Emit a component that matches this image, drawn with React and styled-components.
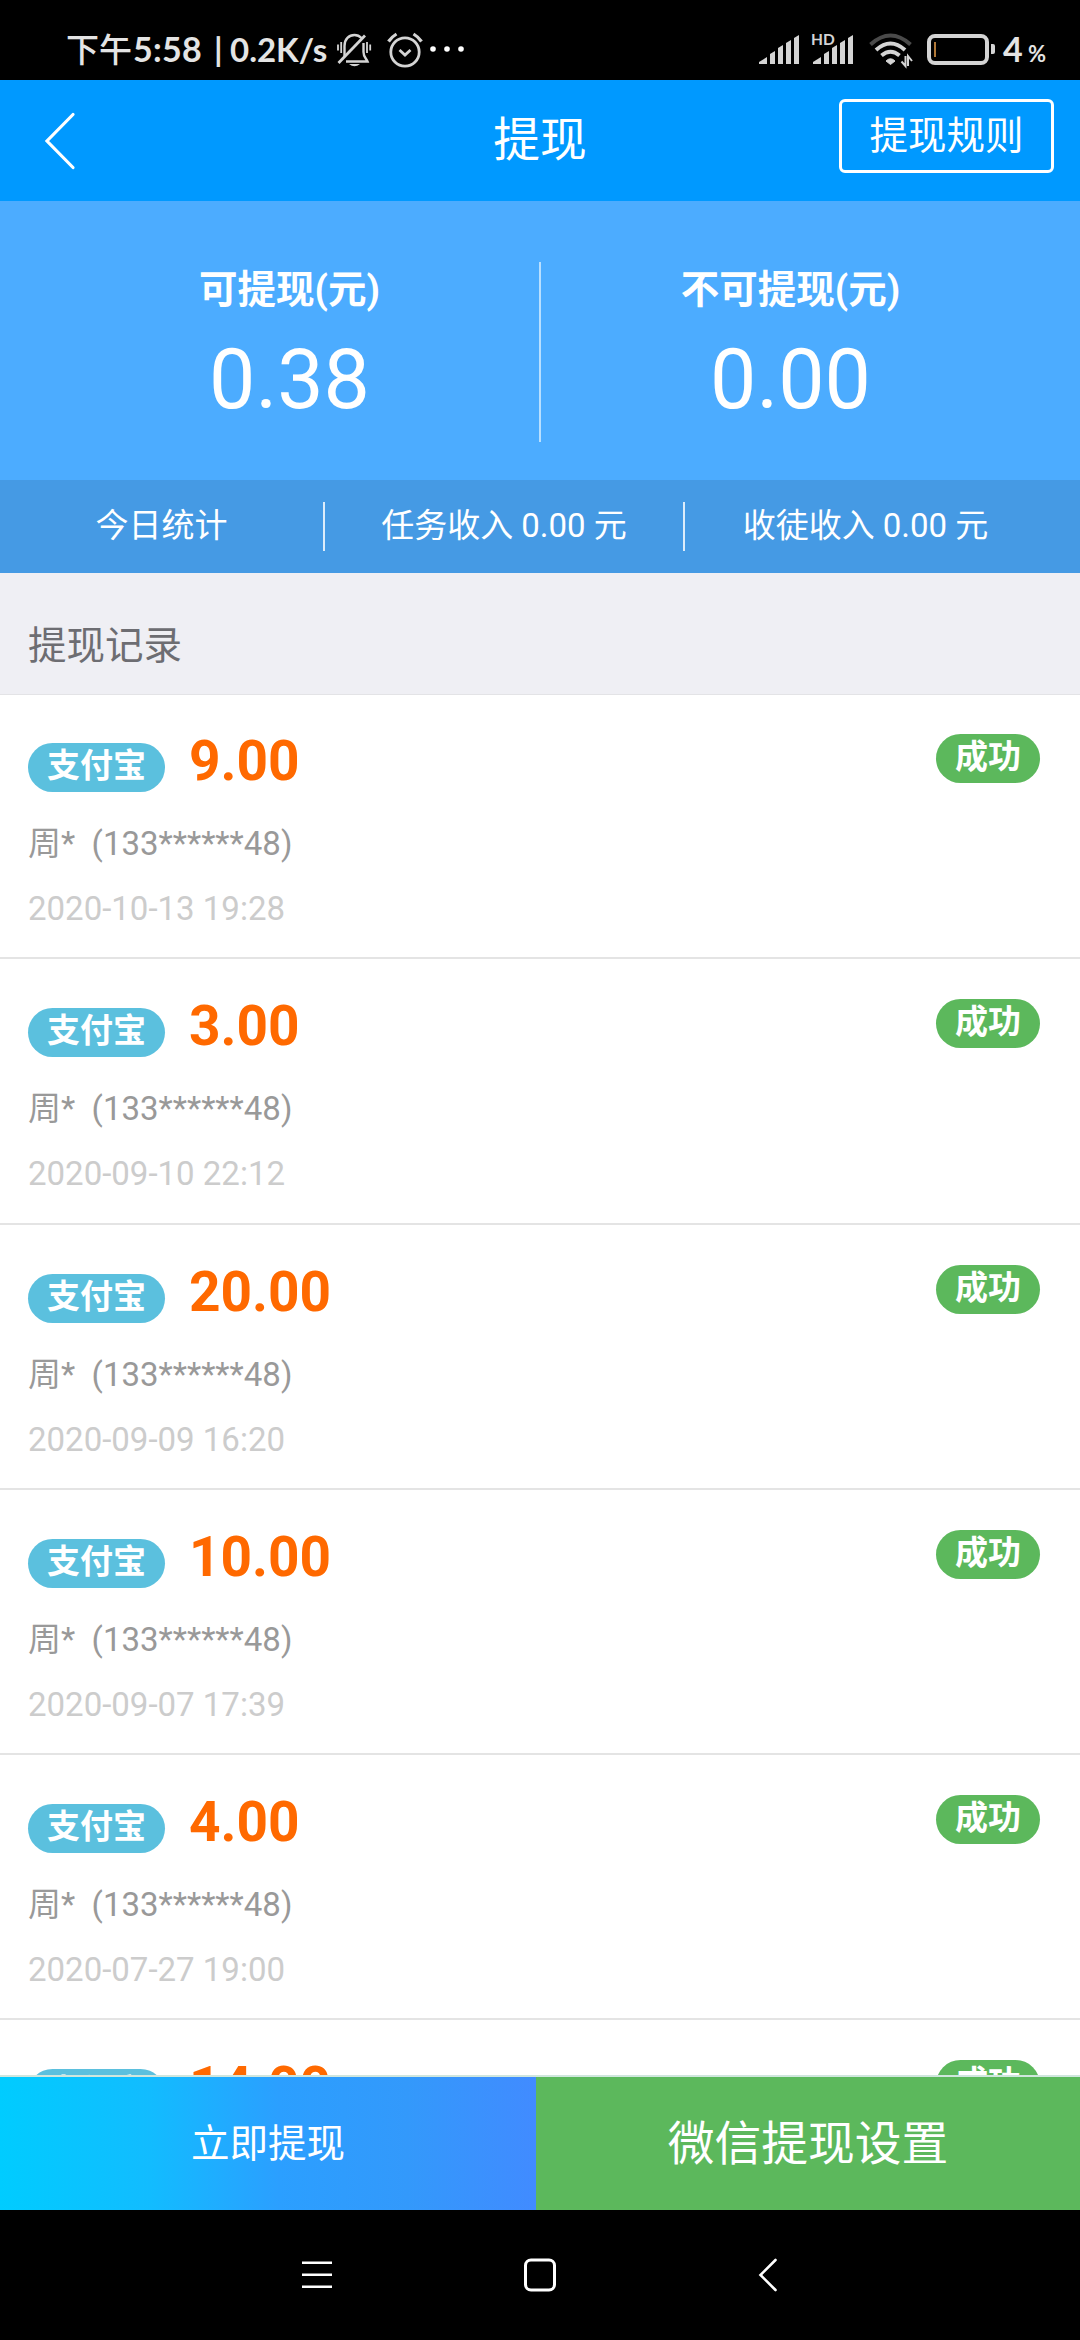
// App.jsx

import React from 'react';
import styled, { createGlobalStyle } from 'styled-components';

const GlobalStyle = createGlobalStyle`
  * {
    box-sizing: border-box;
  }
  body {
    margin: 0;
    background-color: #000;
  }
`;

const Screen = styled.div`
  width: 1080px;
  height: 2340px;
  display: flex;
  flex-direction: column;
  overflow: hidden;
  background-color: #fff;
  font-family: Roboto, 'Noto Sans CJK SC', sans-serif;
`;

const StatusBar = styled.div`
  flex: none;
  height: 80px;
  padding: 19px 34px 0 66px;
  display: flex;
  align-items: center;
  background-color: #000;
  color: #e4e4e4;
  font-family: Lato, 'Noto Sans CJK SC', sans-serif;
  font-size: 33px;
  font-weight: 700;
  white-space: pre;
`;

const StatusText = styled.span`
  width: ${(props) => props.$width}px;
  padding-bottom: 2px;
  line-height: 50px;
  font-size: ${(props) => props.$size || 33}px;
  font-weight: ${(props) => props.$weight || 700};
  letter-spacing: ${(props) => props.$spacing || 0}px;
`;

const StatusSpacer = styled.div`
  flex: 1;
`;

const StatusIcons = styled.div`
  display: flex;
  align-items: center;
  margin-left: ${(props) => props.$left || 0}px;

  svg {
    overflow: visible;
  }
`;

const Percent = styled.span`
  padding-top: 7px;
  font-size: 22px;
  font-weight: 700;
`;

const Header = styled.header`
  flex: none;
  height: 121px;
  padding: 0 26px 0 42px;
  display: grid;
  grid-template-columns: 200px 1fr 215px;
  align-items: center;
  background-color: #0099ff;
  color: #fff;
`;

const Title = styled.h1`
  margin: 0;
  padding: 0 1px 10px 0;
  font-size: 46.75px;
  font-weight: 400;
  text-align: center;
`;

const RuleButton = styled.button`
  height: 74px;
  margin-bottom: 10px;
  padding: 0 0 7px;
  border: 3px solid #fff;
  border-radius: 6px;
  background: none;
  color: #fff;
  font-family: inherit;
  font-size: 38.5px;
`;

const Balance = styled.section`
  flex: none;
  height: 279px;
  padding: 61px 40px 0;
  display: flex;
  align-items: flex-start;
  background-color: #4cacff;
  color: #fff;
`;

const BalanceItem = styled.div`
  flex: 1;
  padding-top: 2px;
  display: flex;
  flex-direction: column;
  align-items: center;
`;

const BalanceLabel = styled.div`
  height: 52px;
  line-height: 52px;
  font-size: 38.5px;
  font-weight: 700;
`;

const BalanceValue = styled.div`
  margin-top: 15px;
  line-height: 98px;
  font-size: 82.5px;
`;

const BalanceDivider = styled.div`
  width: 2px;
  height: 180px;
  background-color: #b8dfff;
`;

const Stats = styled.section`
  flex: none;
  height: 93px;
  display: grid;
  grid-template-columns: 325px 360px 361px;
  align-items: center;
  background-color: #459ae4;
  color: #fff;
`;

const StatItem = styled.div`
  height: 49px;
  line-height: 48px;
  border-right: ${(props) => (props.$last ? 'none' : '2px solid #dcecfa')};
  font-size: 33px;
  text-align: center;
`;

const SectionTitle = styled.h2`
  flex: none;
  height: 121px;
  margin: 0;
  padding: 47px 28px 0;
  line-height: 52px;
  background-color: #efeff4;
  color: #6d6d72;
  font-size: 38.5px;
  font-weight: 400;
`;

const List = styled.ul`
  flex: 1;
  min-height: 0;
  margin: 0;
  padding: 0;
  overflow: hidden;
  list-style: none;
  box-shadow: inset 0 1px #e3e3e6;
`;

const Row = styled.li`
  height: 265.25px;
  padding: 40px 40px 0 28px;
  display: flex;
  justify-content: space-between;
  align-items: flex-start;
  border-bottom: 2px solid #e4e4e4;
`;

const AmountLine = styled.div`
  height: 66px;
  display: flex;
  align-items: flex-start;
`;

const Badge = styled.span`
  height: 49px;
  margin-top: ${(props) => props.$top || 0}px;
  padding: 0 19px;
  line-height: 46px;
  border-radius: 25px;
  background-color: ${(props) => props.$color};
  color: #fff;
  font-size: 33px;
  font-weight: 700;
`;

const Amount = styled.span`
  margin-left: 24px;
  line-height: 54px;
  color: #ff6900;
  font-size: 55px;
  font-weight: 700;
`;

const Account = styled.div`
  margin-top: 19px;
  line-height: 50px;
  color: #999;
  font-size: 33px;
  white-space: pre;
`;

const Time = styled.div`
  margin-top: 15px;
  line-height: 50px;
  color: #ccc;
  font-size: 33px;
`;

const Actions = styled.div`
  flex: none;
  height: 135px;
  display: grid;
  grid-template-columns: 536px 1fr;
  border-top: 2px solid #cfe6dd;
`;

const WithdrawButton = styled.button`
  border: none;
  padding: 0 0 8px;
  background: linear-gradient(90deg, #00ccff 0%, #12bcff 28%, #2b9fff 52%, #3399fb 76%, #418bff 100%);
  color: #fff;
  font-family: inherit;
  font-size: 38.5px;
`;

const WechatButton = styled.button`
  border: none;
  padding: 0 0 9px;
  background-color: #5cb85c;
  color: #fff;
  font-family: inherit;
  font-size: 46.75px;
`;

const NavBar = styled.nav`
  flex: none;
  height: 130px;
  padding: 0 302px;
  display: grid;
  grid-template-columns: 222px 1fr 20px;
  align-items: center;
  background-color: #000;
`;

const records = [
  { amount: '9.00', time: '2020-10-13 19:28' },
  { amount: '3.00', time: '2020-09-10 22:12' },
  { amount: '20.00', time: '2020-09-09 16:20' },
  { amount: '10.00', time: '2020-09-07 17:39' },
  { amount: '4.00', time: '2020-07-27 19:00' },
  { amount: '14.00' },
];

const MuteIcon = () => (
  <svg width="36" height="36" viewBox="0 0 36 36" fill="none" stroke="#d4d4d4" strokeWidth="2.4">
    <path d="M8.5 25V14C8.500 7 13 3 18.500 3C21.500 3 23.500 4 25.500 6M27.500 11V20C27.500 25 30 26 31.500 29.500H10" />
    <path d="M2.500 31L29 3.500" strokeWidth="2.8" />
    <path d="M2 12.500V18.500M5.200 10V21M31 10V21M34.200 12.500V18.500" strokeWidth="1.8" />
    <path d="M13 32H24Q18.500 36.500 13 32Z" fill="#d4d4d4" stroke="none" />
  </svg>
);

const AlarmIcon = () => (
  <svg width="36" height="36" viewBox="0 0 36 36" fill="none" stroke="#d4d4d4" strokeWidth="2.8">
    <circle cx="18" cy="20" r="14.2" />
    <path d="M12.500 18L18 23L23.500 18" />
    <path d="M1.500 9.500Q4.500 5 9.500 2M26.500 2Q31.500 5 34.500 9.500" strokeWidth="3.2" />
  </svg>
);

const Dots = () => (
  <svg width="34" height="8" viewBox="0 0 34 8" fill="#fff">
    <circle cx="3" cy="3" r="2.8" />
    <circle cx="17" cy="3" r="2.8" />
    <circle cx="31" cy="3" r="2.8" />
  </svg>
);

const SignalIcon = ({ hd }) => (
  <svg width="42" height="32" viewBox="0 0 42 32" fill="#d4d4d4">
    <path d="M0 30V28L8 23V30Z" />
    <path d="M11 30V20L16 17V30Z" />
    <path d="M19 30V14L24 11V30Z" />
    <path d="M27 30V9L32 6V30Z" />
    <path d="M35 30V4L40 1V30Z" />
    {hd && (
      <text x="-2" y="11" fontSize="15.5" fontWeight="700" fontFamily="Lato, sans-serif">
        HD
      </text>
    )}
  </svg>
);

const WifiIcon = () => (
  <svg width="44" height="34" viewBox="0 0 44 34" fill="none" stroke="#d4d4d4" strokeWidth="4">
    <path d="M1.500 11.500Q21.500 -6.500 41.500 11.500" stroke="#4a4a4a" />
    <path d="M7 17Q21.500 4 36 17" />
    <path d="M12.500 22.500Q21.500 15 30.500 22.500" />
    <path d="M17 28Q21.500 23.500 26 28L21.500 31.500Z" fill="#d4d4d4" strokeWidth="1" />
    <path d="M36.500 23V33L32.500 28.500M39 33V23L43 28" strokeWidth="2" />
  </svg>
);

const BatteryIcon = () => (
  <svg width="69" height="32" viewBox="0 0 69 32" fill="none">
    <rect x="2" y="2" width="58" height="27" rx="6" stroke="#d4d4d4" strokeWidth="4" />
    <rect x="7" y="8" width="2" height="15" fill="#b07838" />
    <path d="M64 10H66Q68 10 68 12V18Q68 20 66 20H64Z" fill="#d4d4d4" />
  </svg>
);

function App() {
  return (
    <Screen>
      <GlobalStyle />
      <StatusBar>
        <StatusText $width={67} $weight={500}>下午</StatusText>
        <StatusText $width={81} $size={34} $spacing={0.3}>5:58</StatusText>
        <StatusText $width={16}>|</StatusText>
        <StatusText $width={106}>0.2K/s</StatusText>
        <StatusIcons><MuteIcon /></StatusIcons>
        <StatusIcons $left={15}><AlarmIcon /></StatusIcons>
        <StatusIcons $left={7}><Dots /></StatusIcons>
        <StatusSpacer />
        <StatusIcons><SignalIcon /></StatusIcons>
        <StatusIcons $left={12}><SignalIcon hd /></StatusIcons>
        <StatusIcons $left={14}><WifiIcon /></StatusIcons>
        <StatusIcons $left={14}><BatteryIcon /></StatusIcons>
        <StatusIcons $left={7}>
          <StatusText $width={25} $size={34}>4</StatusText>
          <Percent>%</Percent>
        </StatusIcons>
      </StatusBar>

      <Header>
        <svg width="36" height="60" viewBox="0 0 36 60" fill="none" stroke="#fff" strokeWidth="3.200" strokeLinecap="round">
          <path d="M31 3.500L5 30L31 56.500" />
        </svg>
        <Title>提现</Title>
        <RuleButton>提现规则</RuleButton>
      </Header>

      <Balance>
        <BalanceItem>
          <BalanceLabel>可提现(元)</BalanceLabel>
          <BalanceValue>0.38</BalanceValue>
        </BalanceItem>
        <BalanceDivider />
        <BalanceItem>
          <BalanceLabel>不可提现(元)</BalanceLabel>
          <BalanceValue>0.00</BalanceValue>
        </BalanceItem>
      </Balance>

      <Stats>
        <StatItem>今日统计</StatItem>
        <StatItem>任务收入 0.00 元</StatItem>
        <StatItem $last>收徒收入 0.00 元</StatItem>
      </Stats>

      <SectionTitle>提现记录</SectionTitle>

      <List>
        {records.map((record, index) => (
          <Row key={index}>
            <div>
              <AmountLine>
                <Badge $color="#5bc0de" $top={9}>支付宝</Badge>
                <Amount>{record.amount}</Amount>
              </AmountLine>
              {record.time && (
                <>
                  <Account>{'周*  (133******48)'}</Account>
                  <Time>{record.time}</Time>
                </>
              )}
            </div>
            <Badge $color="#5cb85c">成功</Badge>
          </Row>
        ))}
      </List>

      <Actions>
        <WithdrawButton>立即提现</WithdrawButton>
        <WechatButton>微信提现设置</WechatButton>
      </Actions>

      <NavBar>
        <svg width="30" height="34" viewBox="0 0 30 34" stroke="#fff" strokeWidth="2.600">
          <path d="M0 4.700H30M0 16.700H30M0 28.700H30" />
        </svg>
        <svg width="32" height="34" viewBox="0 0 32 34" fill="none" stroke="#fff" strokeWidth="3">
          <rect x="1.500" y="2" width="29" height="30" rx="5.500" />
        </svg>
        <svg width="20" height="34" viewBox="0 0 20 34" fill="none" stroke="#fff" strokeWidth="2.600" strokeLinecap="round">
          <path d="M17.500 2L2.500 17L17.500 32" />
        </svg>
      </NavBar>
    </Screen>
  );
}

export default App;
